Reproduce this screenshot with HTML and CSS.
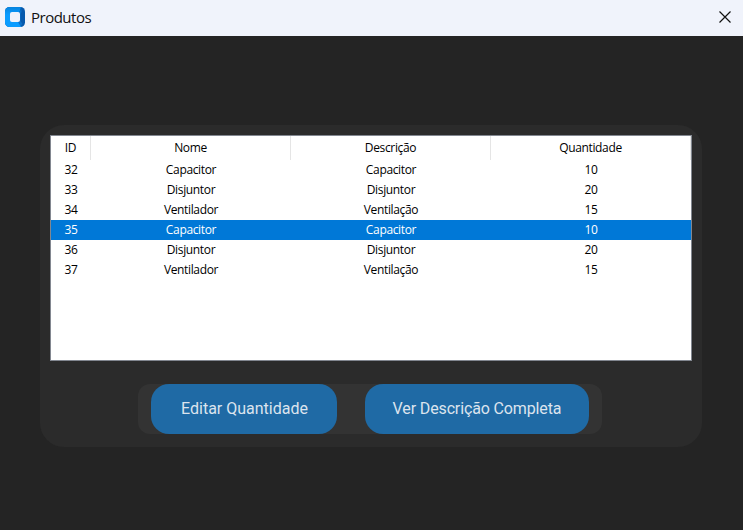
FILE: index.html
```html
<!DOCTYPE html>
<html lang="pt-BR">
<head>
<meta charset="utf-8">
<title>Produtos</title>
<link rel="stylesheet" href="styles.css">
</head>
<body>
<header class="titlebar">
  <svg class="logo" width="20" height="20" viewBox="0 0 20 20">
    <defs><linearGradient id="face" x1="0" y1="0" x2="0" y2="1"><stop offset="0" stop-color="#0784de"/><stop offset=".4" stop-color="#0a9cff"/></linearGradient></defs>
    <rect width="20" height="20" rx="4.5" fill="#0659ad"/>
    <path d="M4.500 0H16L14.500 5V15L16 20H4.500A4.500 4.500 0 0 1 0 15.500V4.500A4.500 4.500 0 0 1 4.500 0Z" fill="url(#face)"/>
    <path d="M14 5L16.500 2V5L15.500 7V14L17.500 17L15.500 19L13 15Z" fill="#0b70c9"/>
    <rect x="5" y="5" width="10" height="10" rx="2" fill="#f0f3fb"/>
  </svg>
  <h1 class="title">Produtos</h1>
  <svg class="close" width="12" height="12" viewBox="0 0 12 12"><path d="M.5 .5L11.500 11.500M11.500 .5L.5 11.500" stroke="#111" stroke-width="1.200"/></svg>
</header>
<main class="panel">
  <div class="table">
    <div class="row head"><span>ID</span><span>Nome</span><span>Descrição</span><span>Quantidade</span></div>
    <div class="row"><span>32</span><span>Capacitor</span><span>Capacitor</span><span>10</span></div>
    <div class="row"><span>33</span><span>Disjuntor</span><span>Disjuntor</span><span>20</span></div>
    <div class="row"><span>34</span><span>Ventilador</span><span>Ventilação</span><span>15</span></div>
    <div class="row selected"><span>35</span><span>Capacitor</span><span>Capacitor</span><span>10</span></div>
    <div class="row"><span>36</span><span>Disjuntor</span><span>Disjuntor</span><span>20</span></div>
    <div class="row"><span>37</span><span>Ventilador</span><span>Ventilação</span><span>15</span></div>
  </div>
  <div class="actions">
    <button class="edit">Editar Quantidade</button>
    <button class="view">Ver Descrição Completa</button>
  </div>
</main>
</body>
</html>
```
FILE: styles.css
```css
* { box-sizing: border-box; }
body {
  margin: 0;
  height: 530px;
  overflow: hidden;
  background: #242424;
  font-family: "Open Sans", "Noto Sans", sans-serif;
}
.titlebar {
  display: flex;
  align-items: center;
  height: 36px;
  padding: 0 12px 2px 5px;
  background: #f0f3fb;
}
.title {
  margin: 0 auto 0 6px;
  padding-bottom: 1px;
  font-size: 15px;
  font-weight: 400;
  line-height: 20px;
  letter-spacing: -0.5px;
  color: #111;
}
.panel {
  width: 662px;
  height: 322px;
  margin: 89px 0 0 40px;
  padding: 10px;
  border-radius: 24px;
  background: #2b2b2b;
}
.table {
  width: 642px;
  height: 226px;
  border: 1px solid #828790;
  background: #fff;
  font-size: 12px;
  letter-spacing: -0.35px;
  color: #000;
}
.row {
  display: grid;
  grid-template-columns: 40px 200px 200px 200px;
  height: 20px;
  line-height: 20px;
  text-align: center;
}
.head {
  height: 24px;
  line-height: 24px;
}
.head span { border-right: 1px solid #e5e5e5; }
.selected {
  background: #0078d7;
  color: #fff;
}
.actions {
  display: flex;
  gap: 28px;
  width: 464px;
  height: 50px;
  margin: 23px 0 0 88px;
  padding: 0 13px;
  border-radius: 12px;
  background: #333;
}
button {
  height: 50px;
  padding: 0 0 1px;
  border: 0;
  border-radius: 18px;
  background: #1f6aa5;
  color: #dce4ee;
  font: 16px Roboto, sans-serif;
}
.edit {
  width: 186px;
  padding-left: 1px;
}
.view {
  width: 224px;
  letter-spacing: -0.13px;
}
```
